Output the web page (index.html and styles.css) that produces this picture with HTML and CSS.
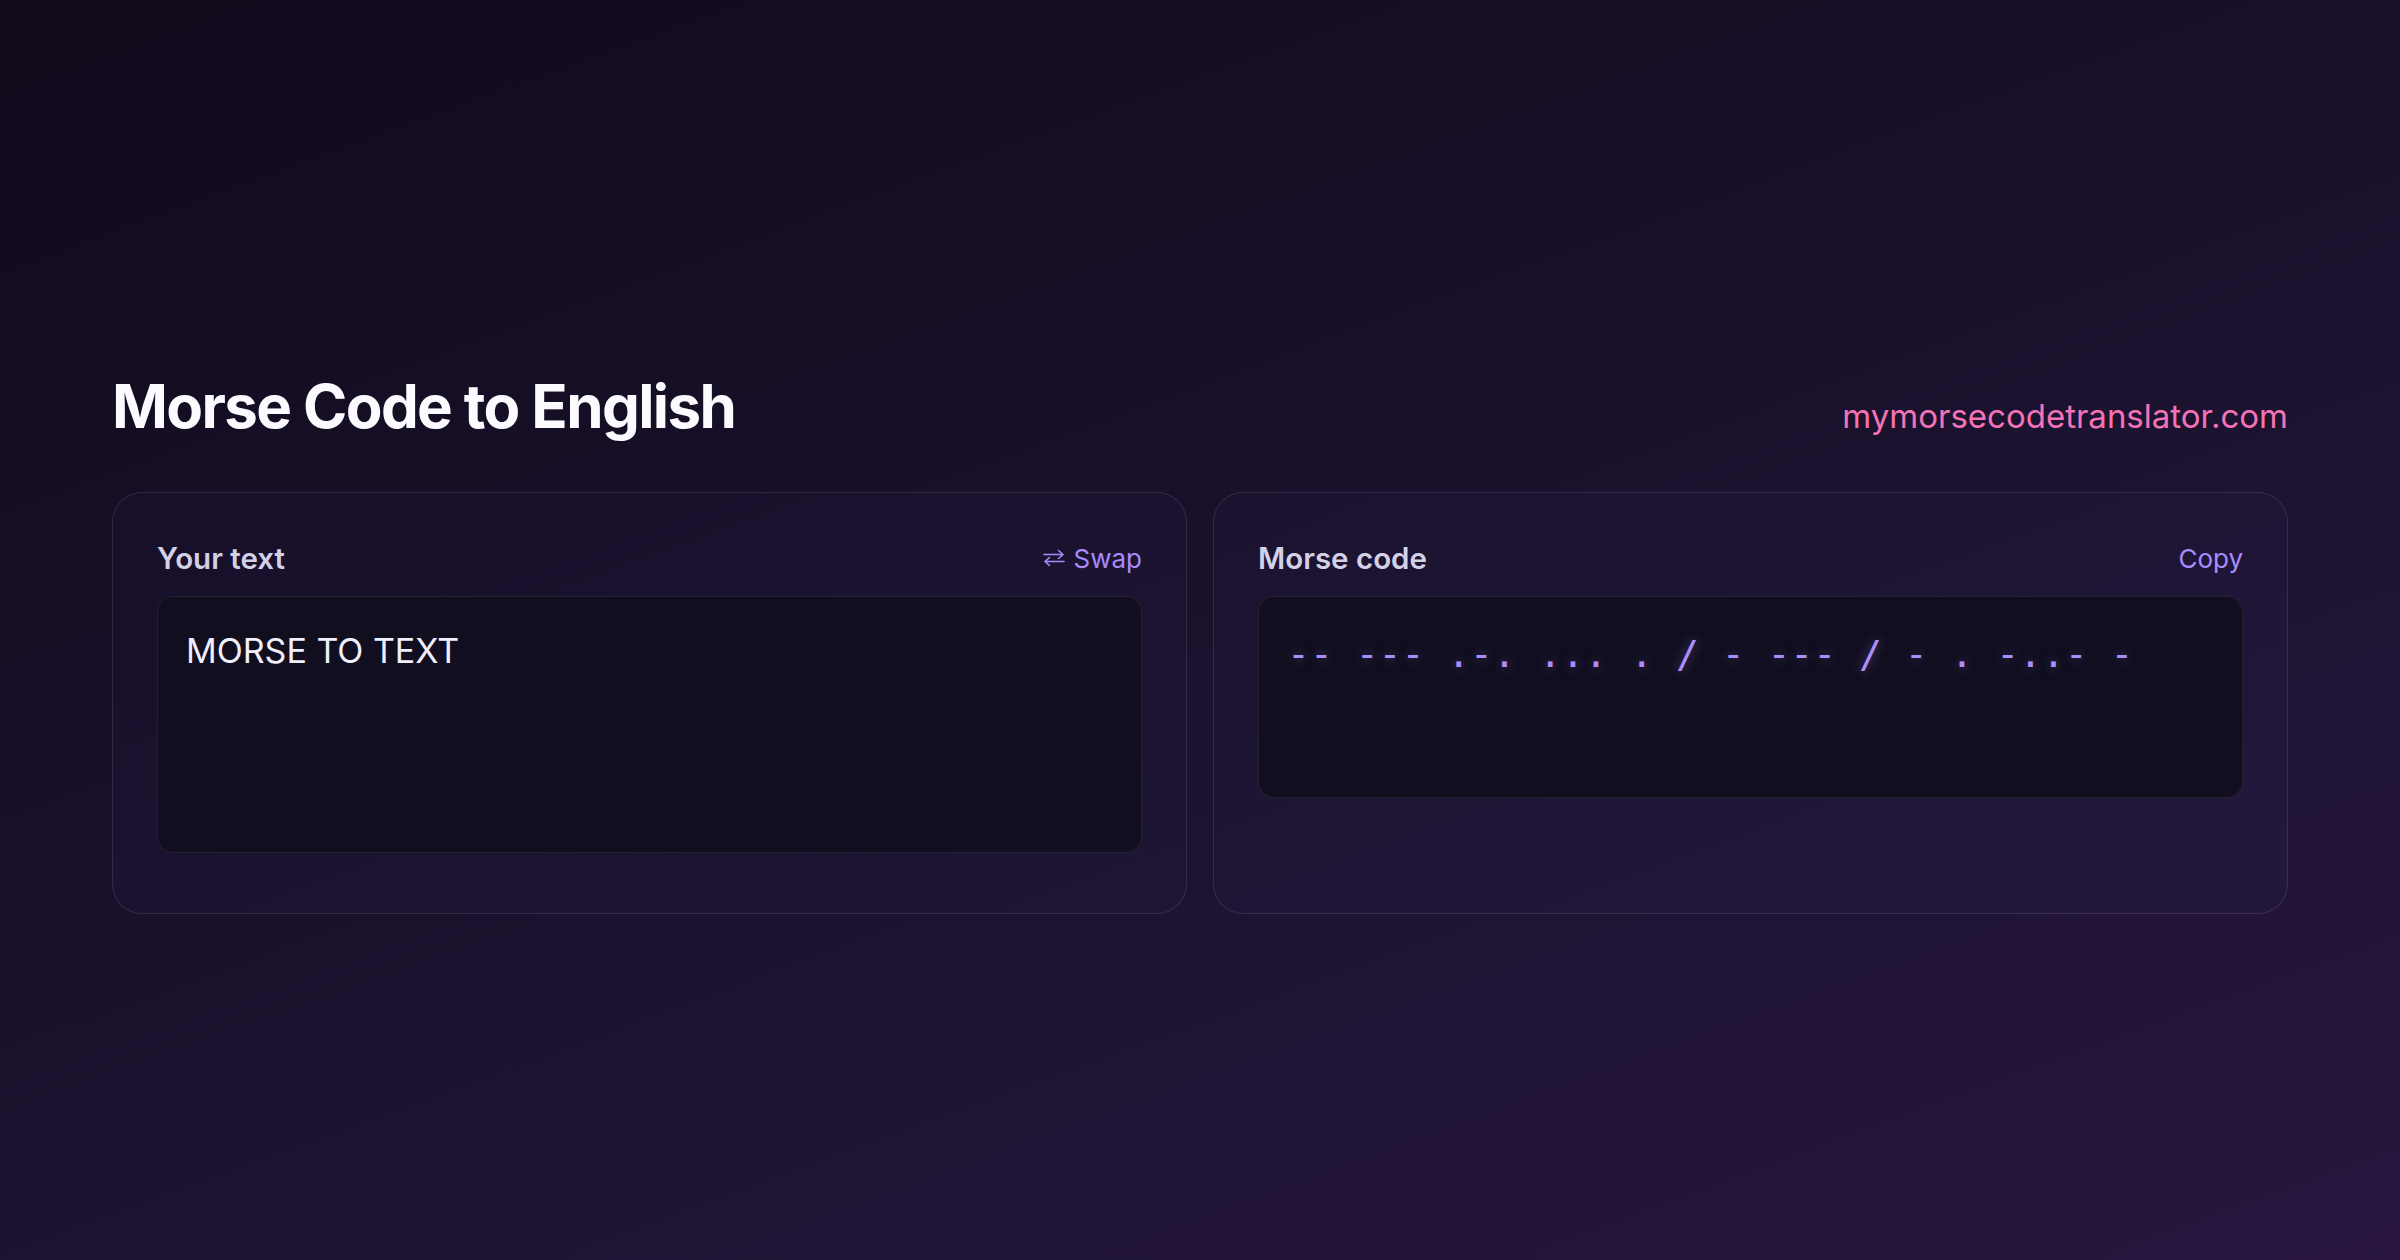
FILE: index.html
```html
<!DOCTYPE html>
<html lang="en">
<head>
<meta charset="utf-8">
<title>Morse Code to English</title>
<link rel="stylesheet" href="styles.css">
</head>
<body>
<main class="page">
  <header class="head">
    <h1 class="title">Morse Code to English</h1>
    <span class="domain">mymorsecodetranslator.com</span>
  </header>
  <section class="cards">
    <div class="card">
      <div class="card-head">
        <span class="label">Your text</span>
        <span class="action">
          <svg class="swap-icon" viewBox="0 0 24 18" width="24" height="18" aria-hidden="true">
            <path d="M2 5.5H21M16.5 1.5L21 5.5L16.5 9.5M22 12.5H3M7.5 8.5L3 12.5L7.5 16.5" fill="none" stroke="currentColor" stroke-width="1.6" stroke-linecap="round" stroke-linejoin="round"/>
          </svg>
          Swap
        </span>
      </div>
      <div class="field field-input">MORSE TO TEXT</div>
    </div>
    <div class="card">
      <div class="card-head">
        <span class="label">Morse code</span>
        <span class="action">Copy</span>
      </div>
      <div class="field field-morse">-- --- .-. ... . / - --- / - . -..- -</div>
    </div>
  </section>
</main>
</body>
</html>
```

FILE: styles.css
```css
* { box-sizing: border-box; }
html, body { margin: 0; padding: 0; }
body {
  width: 2400px;
  height: 1260px;
  overflow: hidden;
  font-family: Inter, "Noto Sans", "Liberation Sans", sans-serif;
  background: linear-gradient(160deg, #110b1c 0%, #170f27 35%, #1d1433 65%, #28163e 100%);
  color: #fff;
}
.page {
  padding: 370px 112px 0;
}
.head {
  display: flex;
  justify-content: space-between;
  align-items: baseline;
  margin-bottom: 50px;
}
.title {
  margin: 0;
  font-size: 60px;
  line-height: 72px;
  font-weight: 700;
  letter-spacing: -0.027em;
  color: #fbfaff;
}
.domain {
  font-size: 33px;
  font-weight: 400;
  color: #f472b6;
}
.cards {
  display: grid;
  grid-template-columns: 1fr 1fr;
  gap: 26px;
}
.card {
  border: 1px solid rgba(255, 255, 255, 0.1);
  border-radius: 30px;
  background: rgba(140, 110, 255, 0.025);
  padding: 46px 44px 60px;
}
.card-head {
  display: flex;
  justify-content: space-between;
  align-items: center;
  margin-bottom: 19px;
  height: 38px;
}
.label {
  font-size: 29.5px;
  font-weight: 600;
  color: #d3d1e6;
}
.action {
  display: flex;
  align-items: center;
  gap: 8px;
  font-size: 26px;
  color: #a78bfa;
}
.swap-icon { display: block; }
.field {
  border: 1px solid rgba(255, 255, 255, 0.08);
  border-radius: 16px;
  background: #110e1f;
  padding: 30px 28px;
}
.field-input {
  height: 257px;
  font-size: 34px;
  line-height: 1.4;
  color: #f1effb;
}
.field-morse {
  height: 202px;
  font-family: "DejaVu Sans Mono", "Liberation Mono", monospace;
  font-size: 38px;
  line-height: 1.5;
  color: #a98ffb;
  white-space: pre;
  text-shadow: 0 0 12px rgba(167, 139, 250, 0.5);
  padding-top: 29px;
}
```
